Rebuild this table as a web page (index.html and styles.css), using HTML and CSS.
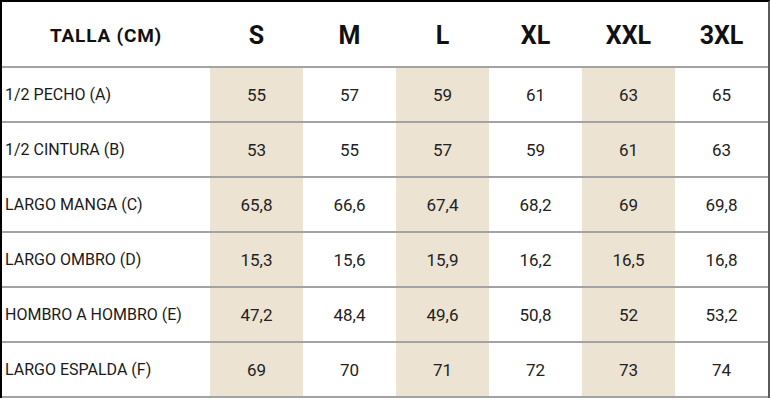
FILE: index.html
```html
<!DOCTYPE html>
<html lang="es">
<head>
<meta charset="utf-8">
<title>Tabla de tallas</title>
<link rel="stylesheet" href="styles.css">
</head>
<body>
<table class="sizes">
  <colgroup>
    <col class="c-label">
    <col class="c-size shade">
    <col class="c-size">
    <col class="c-size shade">
    <col class="c-size">
    <col class="c-size shade">
    <col class="c-size">
  </colgroup>
  <thead>
    <tr>
      <th class="h-label">TALLA (CM)</th>
      <th>S</th><th>M</th><th>L</th><th>XL</th><th>XXL</th><th>3XL</th>
    </tr>
  </thead>
  <tbody>
    <tr><td class="label">1/2 PECHO (A)</td><td>55</td><td>57</td><td>59</td><td>61</td><td>63</td><td>65</td></tr>
    <tr><td class="label">1/2 CINTURA (B)</td><td>53</td><td>55</td><td>57</td><td>59</td><td>61</td><td>63</td></tr>
    <tr><td class="label">LARGO MANGA (C)</td><td>65,8</td><td>66,6</td><td>67,4</td><td>68,2</td><td>69</td><td>69,8</td></tr>
    <tr><td class="label">LARGO OMBRO (D)</td><td>15,3</td><td>15,6</td><td>15,9</td><td>16,2</td><td>16,5</td><td>16,8</td></tr>
    <tr><td class="label">HOMBRO A HOMBRO (E)</td><td>47,2</td><td>48,4</td><td>49,6</td><td>50,8</td><td>52</td><td>53,2</td></tr>
    <tr><td class="label">LARGO ESPALDA (F)</td><td>69</td><td>70</td><td>71</td><td>72</td><td>73</td><td>74</td></tr>
  </tbody>
</table>
</body>
</html>
```
FILE: styles.css
```css
html, body {
  margin: 0;
  padding: 0;
  background: #ffffff;
}

.sizes {
  border-collapse: separate;
  border-spacing: 0;
  table-layout: fixed;
  width: 770px;
  border-top: 2px solid #000000;
  border-left: 2px solid #000000;
  border-right: 2px solid #5a5a5a;
  font-family: Roboto, "Liberation Sans", sans-serif;
  color: #222222;
}

.c-label { width: 208px; }
.c-size { width: 93px; }
.shade { background: #ece3d3; }

.sizes th,
.sizes td {
  padding: 0;
  text-align: center;
  vertical-align: middle;
  border-bottom: 2px solid #a3a3a3;
}

.sizes th {
  font-size: 25px;
  font-weight: 700;
  color: #111111;
  background: #ffffff;
  padding-top: 2px;
  box-sizing: border-box;
  height: 66px;
}

.sizes th.h-label {
  font-size: 19px;
  letter-spacing: 0.8px;
}

.sizes td {
  height: 55px;
  box-sizing: border-box;
  font-size: 17px;
  font-weight: 400;
}

.sizes td.label {
  text-align: left;
  padding-left: 3px;
  font-size: 16px;
  color: #1a1a1a;
}
```
